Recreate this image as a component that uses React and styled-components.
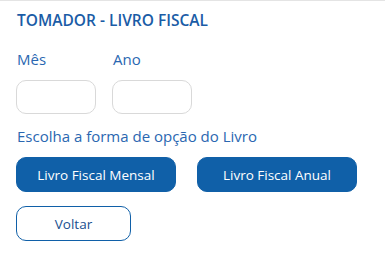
import React from 'react';
import styled, { createGlobalStyle } from 'styled-components';

const GlobalStyle = createGlobalStyle`
  html, body {
    margin: 0;
    padding: 0;
    background: #ffffff;
  }
  body {
    font-family: "Open Sans", "Noto Sans", sans-serif;
  }
`;

const Panel = styled.div`
  width: 385px;
  height: 263px;
  box-sizing: border-box;
  border-top: 1px solid #e4e4e4;
  padding: 9px 16px 0 16px;
  background: #fff;
`;

const Title = styled.h2`
  margin: 0 0 0 1px;
  font-size: 15.5px;
  font-weight: 600;
  color: #1a5ca6;
  line-height: 20px;
`;

const FieldRow = styled.div`
  display: flex;
  gap: 16px;
  margin-top: 19px;
`;

const Field = styled.div`
  display: flex;
  flex-direction: column;
`;

const Label = styled.label`
  font-size: 15px;
  color: #2a67b1;
  line-height: 20px;
  margin-left: 1px;
  margin-bottom: 11px;
`;

const Input = styled.input`
  width: 80px;
  height: 34px;
  box-sizing: border-box;
  border: 1px solid #d9d9d9;
  border-radius: 10px;
  outline: none;
  font-family: inherit;
`;

const Hint = styled.p`
  margin: 12px 0 0 1px;
  font-size: 15px;
  color: #2a67b1;
  line-height: 20px;
`;

const ButtonRow = styled.div`
  display: flex;
  gap: 21px;
  margin-top: 11px;
`;

const Button = styled.button`
  width: ${p => p.$width}px;
  height: 35px;
  box-sizing: border-box;
  border-radius: 10px;
  font-family: inherit;
  font-size: 13.5px;
  cursor: pointer;
  padding: 0;
  border: 1px solid #1060a8;
  background: ${p => (p.$outline ? '#fff' : '#1060a8')};
  color: ${p => (p.$outline ? '#1a4f8f' : '#fff')};
`;

const Footer = styled.div`
  margin-top: 14px;
`;

export default function App() {
  return (
    <>
      <GlobalStyle />
      <Panel>
        <Title>TOMADOR - LIVRO FISCAL</Title>
        <FieldRow>
          <Field>
            <Label>Mês</Label>
            <Input />
          </Field>
          <Field>
            <Label>Ano</Label>
            <Input />
          </Field>
        </FieldRow>
        <Hint>Escolha a forma de opção do Livro</Hint>
        <ButtonRow>
          <Button $width={160}>Livro Fiscal Mensal</Button>
          <Button $width={160}>Livro Fiscal Anual</Button>
        </ButtonRow>
        <Footer>
          <Button $width={115} $outline>Voltar</Button>
        </Footer>
      </Panel>
    </>
  );
}
